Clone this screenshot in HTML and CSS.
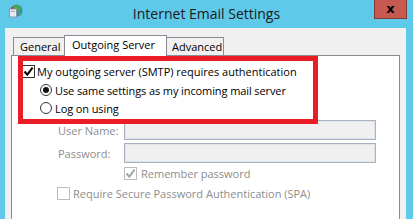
FILE: index.html
```html
<!DOCTYPE html>
<html>
<head>
<meta charset="utf-8">
<link rel="stylesheet" href="styles.css">
</head>
<body>
<div class="window">
  <div class="titlebar">
    <svg class="app-icon" width="17" height="14" viewBox="0 0 17 14">
      <circle cx="9.5" cy="6.5" r="6" fill="#3d86c6"/>
      <path d="M6 2 Q9 0 13 2 L14 6 Q12 9 9 7 Z" fill="#3fae49"/>
      <path d="M11 9 Q13 8 15 9 L14 12 Z" fill="#3fae49"/>
      <rect x="2.5" y="5" width="7" height="8" fill="#e9edf1" stroke="#8c96a3" stroke-width="1"/>
      <rect x="4" y="3" width="2" height="2" fill="#e03b3b"/>
      <rect x="4" y="7" width="4" height="1" fill="#9aa4b0"/>
    </svg>
    <div class="title">Internet Email Settings</div>
    <div class="close"><span>x</span></div>
  </div>
  <div class="client">
    <div class="tabs">
      <div class="tab">General</div>
      <div class="tab selected">Outgoing Server</div>
      <div class="tab">Advanced</div>
    </div>
    <div class="panel">
      <div class="row auth-row">
        <span class="check checked"><svg width="11" height="11" viewBox="0 0 11 11"><path d="M1.5 5.5 L4.3 8.6 L9.6 1.6" fill="none" stroke="#000" stroke-width="2"/></svg></span>
        <span class="label">My outgoing server (SMTP) requires authentication</span>
      </div>
      <div class="row radio-row">
        <span class="radio on"></span>
        <span class="label">Use same settings as my incoming mail server</span>
      </div>
      <div class="row radio-row">
        <span class="radio"></span>
        <span class="label">Log on using</span>
      </div>
      <div class="field first">
        <span class="field-label">User Name:</span>
        <span class="input"></span>
      </div>
      <div class="field">
        <span class="field-label">Password:</span>
        <span class="input"></span>
      </div>
      <div class="row remember-row">
        <span class="check disabled"><svg width="11" height="11" viewBox="0 0 11 11"><path d="M1.5 5.5 L4.3 8.6 L9.6 1.6" fill="none" stroke="#a6a6a6" stroke-width="2"/></svg></span>
        <span class="label dim">Remember password</span>
      </div>
      <div class="row spa-row">
        <span class="check disabled"></span>
        <span class="label dim">Require Secure Password Authentication (SPA)</span>
      </div>
      <div class="highlight"></div>
    </div>
  </div>
</div>
</body>
</html>
```
FILE: styles.css
```css
html, body {
  margin: 0;
  padding: 0;
}
body {
  width: 413px;
  height: 219px;
  overflow: hidden;
  background: #5fc9ea;
  font-family: "Open Sans", "Noto Sans", sans-serif;
  font-size: 11px;
  color: #000;
}
.window {
  display: flex;
  flex-direction: column;
  height: 219px;
}
.titlebar {
  height: 28px;
  display: grid;
  grid-template-columns: 40px 1fr 40px;
  align-items: start;
}
.app-icon {
  margin: 4px 0 0 7px;
}
.title {
  text-align: center;
  font-size: 14px;
  color: #1a1a1a;
  line-height: 16px;
  padding-top: 6px;
}
.close {
  justify-self: end;
  margin-right: 6px;
  width: 31px;
  height: 18px;
  background: #c75a50;
  border: 1px solid #843a35;
  border-top: none;
  display: flex;
  align-items: center;
  justify-content: center;
  font-family: "DejaVu Sans", sans-serif;
  font-weight: bold;
  font-size: 13px;
  line-height: 13px;
  color: #000;
}
.close span {
  margin-top: -2px;
}
.client {
  flex: 1;
  background: #f0f0f0;
  margin: 0 7px 0 5px;
  padding: 7px 6px 0 6px;
  display: flex;
  flex-direction: column;
}
.tabs {
  display: flex;
  align-items: flex-end;
  height: 20px;
  padding-left: 2px;
}
.tab {
  height: 17px;
  border: 1px solid #898c95;
  border-bottom: none;
  background: #f0f0f0;
  line-height: 17px;
  padding: 0 5px;
  margin-right: -1px;
  white-space: nowrap;
}
.tab:first-child {
  width: 38px;
  padding: 0 6px;
}
.tab.selected {
  height: 20px;
  background: #fff;
  line-height: 18px;
  margin-bottom: -1px;
  position: relative;
  z-index: 1;
  width: 87px;
  padding: 0 7px;
}
.tab:last-child {
  width: 46px;
}
.panel {
  flex: 1;
  background: #fff;
  border: 1px solid #898c95;
  border-bottom: none;
  position: relative;
  display: flex;
  flex-direction: column;
}
.row {
  display: flex;
  align-items: center;
  white-space: nowrap;
}
.auth-row {
  height: 19px;
  margin-top: 6px;
  padding-left: 10px;
  gap: 2px;
}
.radio-row {
  height: 18px;
  padding-left: 28px;
  gap: 3px;
}
.radio-row .label {
  letter-spacing: -0.1px;
}
.check {
  box-sizing: border-box;
  width: 13px;
  height: 13px;
  border: 1px solid #333;
  background: #fff;
  display: flex;
  align-items: center;
  justify-content: center;
  flex: none;
}
.check.disabled {
  border-color: #bcbcbc;
}
.radio {
  box-sizing: border-box;
  width: 12px;
  height: 12px;
  border: 1px solid #333;
  border-radius: 50%;
  background: #fff;
  display: flex;
  align-items: center;
  justify-content: center;
  flex: none;
}
.radio.on::after {
  content: "";
  width: 6px;
  height: 6px;
  border-radius: 50%;
  background: #111;
}
.field {
  display: flex;
  align-items: center;
  padding-left: 46px;
  margin-top: 3px;
}
.field-label {
  width: 66px;
  color: #8d8d8d;
}
.input {
  box-sizing: border-box;
  width: 252px;
  height: 20px;
  background: #f0f0f0;
  border: 1px solid #a9b3bf;
  box-shadow: inset 0 0 0 1px #dfe4ea;
}
.remember-row {
  height: 14px;
  margin-top: 3px;
  padding-left: 112px;
  gap: 4px;
}
.spa-row {
  height: 14px;
  margin-top: 6px;
  padding-left: 45px;
  gap: 3px;
}
.dim {
  color: #8d8d8d;
}
.highlight {
  position: absolute;
  left: 6px;
  top: 0;
  width: 300px;
  height: 68px;
  box-sizing: border-box;
  border: 5px solid #ec1c24;
}
```
